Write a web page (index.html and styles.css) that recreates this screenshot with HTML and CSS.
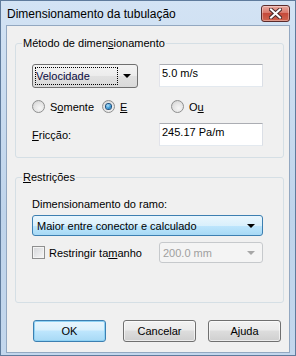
FILE: index.html
```html
<!DOCTYPE html>
<html>
	<head>
		<meta charset="UTF-8">
		<title>Dimensionamento da tubulação</title>
		<link rel="stylesheet" href="styles.css">
	</head>
	<body>
		<div class="window">
			<div class="titlebar">
				<span class="title">Dimensionamento da tubulação</span>
				<span class="close">
					<svg width="13" height="11" viewBox="0 0 13 11">
						<path d="M2 1.5 L11 9.5 M11 1.5 L2 9.5" stroke="#4a2a2a" stroke-width="4" stroke-linecap="square"/>
						<path d="M2 1.5 L11 9.5 M11 1.5 L2 9.5" stroke="#ffffff" stroke-width="2" stroke-linecap="square"/>
					</svg>
				</span>
			</div>
			<div class="client">
				<div class="group first">
					<div class="legend">Método de dimen<u>s</u>ionamento</div>
					<div class="row top">
						<div class="combo plain"><span class="focus">Velocidade</span><span class="arrow"></span></div>
						<div class="edit">5.0 m/s</div>
					</div>
					<div class="row radios">
						<span class="opt w1"><span class="radio"></span><span>S<u>o</u>mente</span></span>
						<span class="opt w2"><span class="radio on"></span><span><u>E</u></span></span>
						<span class="opt"><span class="radio"></span><span>O<u>u</u></span></span>
					</div>
					<div class="row friction">
						<span class="label"><span><u>F</u>ricção:</span></span>
						<div class="edit">245.17 Pa/m</div>
					</div>
				</div>
				<div class="group second">
					<div class="legend"><u>R</u>estrições</div>
					<div class="caption">Dimensionamento do ramo:</div>
					<div class="combo blue"><span class="text">Maior entre conector e calculado</span><span class="arrow"></span></div>
					<div class="row check">
						<span class="label"><span class="box"></span><span>Restringir ta<u>m</u>anho</span></span>
						<div class="combo disabled"><span class="text">200.0 mm</span><span class="arrow"></span></div>
					</div>
				</div>
				<div class="buttons">
					<button class="btn default">OK</button>
					<button class="btn cancel">Cancelar</button>
					<button class="btn">Ajuda</button>
				</div>
			</div>
		</div>
	</body>
</html>
```
FILE: styles.css
```css
*{
	box-sizing: border-box;
}
body{
	margin: 0;
	font-family: "Liberation Sans", Arial, sans-serif;
	font-size: 11px;
	color: #000;
	background: #fff;
}
.window{
	width: 296px;
	height: 356px;
	border: 1px solid #5f7b9c;
	background: linear-gradient(#d3e3f4, #bfd4eb 60%, #c3d7ed);
	display: flex;
	flex-direction: column;
	overflow: hidden;
}
.titlebar{
	height: 24px;
	display: flex;
	align-items: flex-start;
	padding: 0 5px 0 6px;
}
.title{
	font-size: 12px;
	line-height: 14px;
	margin-top: 6px;
	flex: 1;
}
.close{
	width: 29px;
	height: 17px;
	margin-top: 4px;
	border: 1px solid #5b2b2b;
	border-radius: 3px;
	background: linear-gradient(#e9a99f, #d9786b 45%, #c54a3b 50%, #d0644f);
	box-shadow: inset 0 0 0 1px rgba(255,255,255,0.35);
	display: flex;
	align-items: center;
	justify-content: center;
}
.close svg{
	display: block;
}
.client{
	height: 328px;
	margin: 0 5px;
	border: 1px solid #93a8c1;
	background: #f0f0f0;
	padding: 0 5px 0 8px;
}
.group{
	border: 1px solid #d5dfe5;
	border-radius: 3px;
	padding: 0 0 0 16px;
}
.group.first{
	margin-top: 17px;
	padding-bottom: 11px;
}
.group.second{
	margin-top: 19px;
	padding-bottom: 39px;
}
.legend{
	margin: -7px 0 0 -10px;
	padding: 0 1px;
	line-height: 13px;
	background: #f0f0f0;
	width: fit-content;
}
.row{
	display: flex;
	align-items: center;
}
.row.top{
	margin-top: 14px;
	align-items: flex-start;
}
.row.radios{
	margin-top: 12px;
	height: 13px;
}
.row.friction{
	margin-top: 10px;
}
.row.check{
	margin-top: 6px;
}
.label{
	width: 127px;
	display: flex;
	align-items: center;
	gap: 4px;
}
.caption{
	margin-top: 14px;
	line-height: 13px;
}
.edit{
	width: 104px;
	height: 23px;
	background: #fff;
	border: 1px solid;
	border-color: #abadb3 #dbdfe6 #e3e9ef #e2e3ea;
	padding: 2px 2px;
	line-height: 13px;
}
.row.top .edit{
	margin-left: 21px;
}
.combo{
	display: flex;
	align-items: center;
	border: 1px solid #707070;
	border-radius: 3px;
	position: relative;
}
.combo.plain{
	width: 106px;
	height: 24px;
	background: linear-gradient(#f3f3f3, #ececec 50%, #e1e1e1 50%, #d9d9d9);
	padding-left: 2px;
}
.focus{
	width: 83px;
	height: 18px;
	border: 1px dotted #000;
	line-height: 16px;
	padding-left: 0;
	color: #0a0a40;
}
.arrow{
	position: absolute;
	right: 7px;
	top: 50%;
	margin-top: -2px;
	border-left: 4px solid transparent;
	border-right: 4px solid transparent;
	border-top: 4px solid #000;
}
.combo.plain .arrow{
	right: 6px;
}
.combo.blue{
	width: 231px;
	height: 21px;
	margin-top: 4px;
	border-color: #3c7fb1;
	background: linear-gradient(#eaf6fd, #d9f0fc 50%, #bee6fd 50%, #a7d9f5);
	padding-left: 4px;
}
.combo.disabled{
	width: 104px;
	height: 21px;
	border-color: #c6c9cc;
	background: #f4f4f4;
	color: #a0a0a0;
	padding-left: 3px;
}
.combo.disabled .arrow{
	border-top-color: #a7a7a7;
}
.opt{
	display: flex;
	align-items: center;
	gap: 5px;
}
.opt.w1{
	width: 70px;
}
.opt.w2{
	width: 69px;
}
.radio{
	width: 13px;
	height: 13px;
	border-radius: 50%;
	border: 1px solid #8e8f8f;
	background: radial-gradient(circle at 60% 65%, #f6f6f6 0%, #e3e3e3 55%, #c9c9c9 100%);
	display: flex;
	align-items: center;
	justify-content: center;
}
.radio.on::after{
	content: "";
	width: 5px;
	height: 5px;
	border-radius: 50%;
	background: radial-gradient(circle at 40% 35%, #b4e3fb, #2a8fd0 60%, #0d4d86);
	box-shadow: 0 0 0 1px #1e4f7e;
}
.box{
	width: 13px;
	height: 13px;
	border: 1px solid #8e8f8f;
	background: linear-gradient(135deg, #d4d6d9, #f7f7f7);
	box-shadow: inset 0 0 0 1px #f4f4f4;
}
.buttons{
	display: flex;
	margin-top: 17px;
	padding-left: 18px;
	gap: 12px;
}
.btn{
	width: 73px;
	height: 22px;
	font-family: "Liberation Sans", Arial, sans-serif;
	font-size: 11px;
	color: #000;
	border: 1px solid #707070;
	border-radius: 3px;
	background: linear-gradient(#f2f2f2, #ebebeb 45%, #dddddd 50%, #cfcfcf);
	box-shadow: inset 0 0 0 1px rgba(255,255,255,0.6);
	padding: 0;
}
.btn.default{
	border-color: #3c7fb1;
	background: linear-gradient(#eaf6fd, #d9f0fc 45%, #bee6fd 50%, #a7d9f5);
	box-shadow: inset 0 0 0 1px #8fd2f4;
	margin-right: 5px;
}
```
